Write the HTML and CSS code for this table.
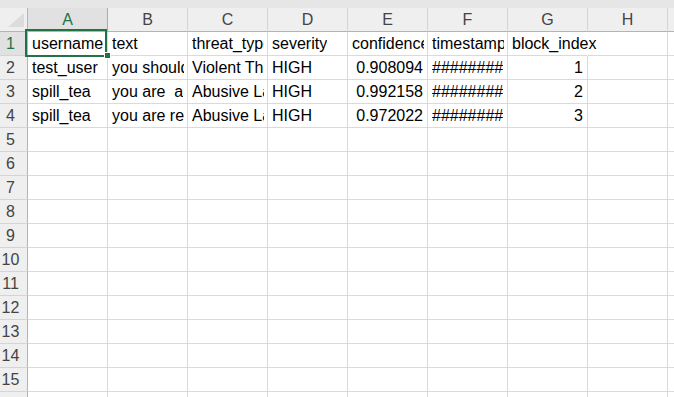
FILE: index.html
```html
<!DOCTYPE html>
<html lang="en">

<head>
    <meta charset="UTF-8">
    <meta name="viewport" content="width=device-width, initial-scale=1.0">
    <title>threats.csv</title>
    <link rel="stylesheet" href="styles.css">
</head>

<body>
    <div class="sheet" id="sheet">
        <div class="top-band"></div>
        <!-- Cells are added by the script below -->
    </div>

    <script>
        const COLUMNS = ["A", "B", "C", "D", "E", "F", "G", "H"];
        const ROW_COUNT = 16;

        // Parsed rows of the csv file, header first
        const rows = [
            ["username", "text", "threat_type", "severity", "confidence", "timestamp", "block_index"],
            ["test_user", "you should", "Violent Threat", "HIGH", 0.908094, "########", 1],
            ["spill_tea", "you are  a", "Abusive Language", "HIGH", 0.992158, "########", 2],
            ["spill_tea", "you are ret", "Abusive Language", "HIGH", 0.972022, "########", 3]
        ];

        const sheet = document.getElementById("sheet");

        function addCell(className, text) {
            const cell = document.createElement("div");
            cell.className = className;
            if (text !== undefined && text !== "") {
                const span = document.createElement("span");
                span.className = "cell-text";
                span.textContent = text;
                cell.appendChild(span);
            }
            sheet.appendChild(cell);
            return cell;
        }

        function renderHeader() {
            const corner = addCell("corner");
            corner.innerHTML = '<span class="select-all"></span>';
            COLUMNS.forEach(col => {
                addCell(col === "A" ? "col-head active" : "col-head", col);
            });
            addCell("col-head");
        }

        function renderRows() {
            for (let r = 1; r <= ROW_COUNT; r++) {
                addCell(r === 1 ? "row-head active" : "row-head", r);
                const data = rows[r - 1] || [];
                COLUMNS.forEach((col, i) => {
                    const value = data[i];
                    const isNumber = typeof value === "number";
                    const cell = addCell(isNumber ? "cell num" : "cell", value);
                    // text runs on into the next cell when that one is empty
                    if (value !== undefined && !isNumber && data[i + 1] === undefined) {
                        cell.classList.add("spill");
                    }
                    if (r === 1 && i === 0) {
                        cell.classList.add("selected");
                        cell.insertAdjacentHTML("beforeend", '<div class="selection"><span class="fill-handle"></span></div>');
                    }
                });
                addCell("cell");
            }
        }

        renderHeader();
        renderRows();
    </script>
</body>

</html>
```

FILE: styles.css
```css
body {
    margin: 0;
    padding: 0;
    background-color: #fff;
    font-family: "Liberation Sans", Arial, sans-serif;
    overflow: hidden;
}

.sheet {
    display: grid;
    grid-template-columns: 28px repeat(8, 80px) 1fr;
    grid-template-rows: 8px repeat(17, 24px);
    width: 674px;
    height: 397px;
    overflow: hidden;
}

.top-band {
    grid-column: 1 / -1;
    background-color: #e6e6e6;
}

/* Headers */
.corner {
    background-color: #efefef;
    border-right: 1px solid #b4b4b4;
    border-bottom: 1px solid #b4b4b4;
    box-sizing: border-box;
    display: flex;
    justify-content: flex-end;
    align-items: flex-end;
    padding: 0 3px 4px 0;
}

.select-all {
    width: 16px;
    height: 14px;
    background-color: #dcdcdc;
    clip-path: polygon(100% 0, 100% 100%, 0 100%);
}

.col-head {
    background-color: #efefef;
    border-right: 1px solid #d4d4d4;
    border-bottom: 1px solid #b4b4b4;
    box-sizing: border-box;
    display: flex;
    justify-content: center;
    align-items: center;
    color: #444;
    font-size: 16px;
}

.row-head {
    background-color: #efefef;
    border-right: 1px solid #b4b4b4;
    border-bottom: 1px solid #d4d4d4;
    box-sizing: border-box;
    display: flex;
    justify-content: center;
    align-items: center;
    padding-right: 6px;
    color: #444;
    font-size: 16px;
}

.col-head.active,
.row-head.active {
    background-color: #e1e1e1;
    color: #217346;
}

.col-head.active {
    border-right-color: #ababab;
}

/* Cells */
.cell {
    border-right: 1px solid #dadada;
    border-bottom: 1px solid #dadada;
    box-sizing: border-box;
    display: flex;
    align-items: center;
    padding: 0 3px 0 4px;
    color: #000;
    font-size: 16px;
    white-space: pre;
    min-width: 0;
}

.cell .cell-text {
    overflow: hidden;
    white-space: pre;
}

.cell.spill {
    position: relative;
    z-index: 1;
    border-right-color: transparent;
}

.cell.spill .cell-text {
    overflow: visible;
}

.cell.num {
    justify-content: flex-end;
    padding-right: 4px;
}

.cell.selected {
    position: relative;
}

.selection {
    position: absolute;
    left: -3px;
    top: -3px;
    width: 82px;
    height: 28px;
    border: 2px solid #217346;
    box-sizing: border-box;
    z-index: 1;
}

.fill-handle {
    position: absolute;
    left: 77px;
    top: 21px;
    width: 5px;
    height: 5px;
    background-color: #217346;
    border: 1px solid #fff;
}
```
